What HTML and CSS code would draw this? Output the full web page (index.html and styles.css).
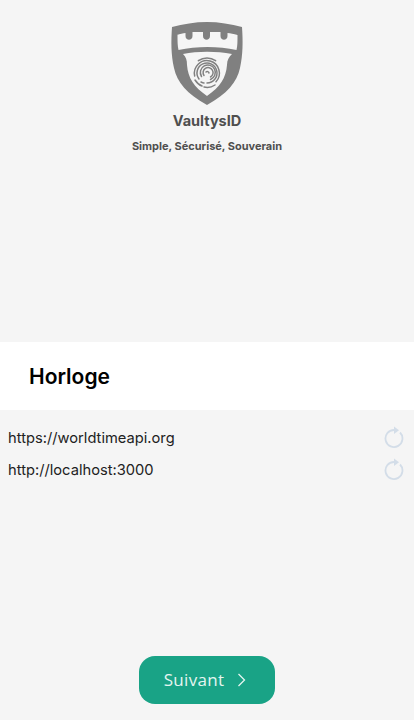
FILE: index.html
```html
<!DOCTYPE html>
<html lang="fr">
<head>
    <meta charset="UTF-8">
    <meta name="viewport" content="width=device-width, initial-scale=1.0">
    <title>VaultysID</title>
    <link rel="stylesheet" href="styles.css">
</head>
<body>
    <div class="app">
        <div class="brand">
            <svg class="logo" viewBox="0 0 72 84" width="72" height="84" aria-hidden="true">
                <!-- shield -->
                <path class="shield" d="M1 6C12 3 24 1 36 1s24 2 35 5c1 14 1 28-2 41-3 14-13 26-33 37C16 73 6 61 3 47 0 34 0 20 1 6Z"/>
                <!-- tower top -->
                <path class="cut" d="M6 14c3-1 6-2 8.500-2v3c0 5 7 5 7 0v-4h10.500v4c0 5 7 5 7 0v-4h10.500v4c0 5 7 5 7 0v-3c3 0 6 1 10 2 0 6 0 11-1 15-18-4-40-4-58 0-1-4-1-9-1-15Z"/>
                <!-- lower panel -->
                <path class="cut" d="M12 33c15-3 33-3 49 0-3 3-5 6-5 11-1 13-7 22-20 31-13-9-19-18-20-31 0-5-1-8-4-11Z"/>
                <!-- fingerprint -->
                <g class="print">
                    <path d="M27.400 39.700a15 15 0 0 1 17.200 0"/>
                    <path d="M23.700 55a12.500 12.500 0 1 1 21.300 5.700"/>
                    <path d="M28 58a10 10 0 1 1 8 4"/>
                    <path d="M30.500 55.500a7.500 7.500 0 1 1 9 3"/>
                    <path d="M33 54.500a5 5 0 1 1 6.500 1.500"/>
                    <path d="M35 51a1.800 1.800 0 0 1 3 1"/>
                    <path d="M24 59c2 3 4 5 7 6"/>
                    <path d="M33 66c4 1 8 0 11-2"/>
                    <path d="M33 62c-1 0-2-.5-3-1"/>
                </g>
            </svg>
            <div class="brand-name">VaultysID</div>
            <div class="brand-tagline">Simple, Sécurisé, Souverain</div>
        </div>

        <div class="title-bar">
            <h1>Horloge</h1>
        </div>

        <ul class="sites">
            <li class="site">
                <span>https://worldtimeapi.org</span>
                <svg class="refresh" viewBox="0 0 20 24" width="20" height="24" aria-hidden="true">
                    <path d="M10 4a8.500 8.500 0 1 0 6 2.500"/>
                    <path class="arrow" d="M10 .5V8l5-3.800Z"/>
                </svg>
            </li>
            <li class="site">
                <span>http://localhost:3000</span>
                <svg class="refresh" viewBox="0 0 20 24" width="20" height="24" aria-hidden="true">
                    <path d="M10 4a8.500 8.500 0 1 0 6 2.500"/>
                    <path class="arrow" d="M10 .5V8l5-3.800Z"/>
                </svg>
            </li>
        </ul>

        <div class="actions">
            <button class="next-btn">
                <span>Suivant</span>
                <svg viewBox="0 0 10 14" width="10" height="14" aria-hidden="true">
                    <path d="M1.500 1l6 6-6 6"/>
                </svg>
            </button>
        </div>
    </div>
</body>
</html>
```

FILE: styles.css
```css
:root {
    --page-bg: #f5f5f5;
    --logo-grey: #808080;
    --brand-text: #4f4f4f;
    --accent: #19a386;
    --icon-blue: #d3dde8;
}

html, body {
    height: 100%;
}

body {
    margin: 0;
    font-family: Inter, "Open Sans", sans-serif;
    background-color: var(--page-bg);
    overflow: hidden;
}

.app {
    height: 720px;
    display: flex;
    flex-direction: column;
}

.brand {
    height: 342px;
    box-sizing: border-box;
    padding-top: 21px;
    display: flex;
    flex-direction: column;
    align-items: center;
}

.logo {
    display: block;
}

.shield {
    fill: var(--logo-grey);
}

.cut {
    fill: var(--page-bg);
}

.print path {
    fill: none;
    stroke: var(--logo-grey);
    stroke-width: 1.5;
    stroke-linecap: round;
}

.brand-name {
    margin-top: 7px;
    font-size: 14.5px;
    line-height: 18px;
    font-weight: 700;
    color: var(--brand-text);
}

.brand-tagline {
    margin-top: 9px;
    font-size: 11px;
    line-height: 14px;
    font-weight: 700;
    color: var(--brand-text);
}

.title-bar {
    height: 68px;
    box-sizing: border-box;
    padding-left: 29px;
    display: flex;
    align-items: center;
    background-color: #fff;
}

.title-bar h1 {
    margin: 0;
    font-size: 21px;
    font-weight: 600;
    color: #000;
}

.sites {
    margin: 0;
    padding: 12px 8px 0;
    list-style: none;
}

.site {
    height: 32px;
    display: flex;
    align-items: center;
    justify-content: space-between;
    font-size: 14.7px;
    color: #222;
}

.refresh {
    margin-right: 2px;
}

.refresh path {
    fill: none;
    stroke: var(--icon-blue);
    stroke-width: 1.8;
}

.refresh .arrow {
    fill: var(--icon-blue);
    stroke: none;
}

.actions {
    margin-top: auto;
    padding-bottom: 16px;
    display: flex;
    justify-content: center;
}

.next-btn {
    width: 136px;
    height: 48px;
    border: none;
    border-radius: 16px;
    display: flex;
    align-items: center;
    justify-content: center;
    gap: 13px;
    padding-right: 9px;
    font-family: "Open Sans", sans-serif;
    font-size: 17px;
    letter-spacing: 0.3px;
    color: #e4f5f0;
    background-color: var(--accent);
}

.next-btn span {
    padding-bottom: 2px;
}

.next-btn svg path {
    fill: none;
    stroke: #e4f5f0;
    stroke-width: 1.3;
}
```
